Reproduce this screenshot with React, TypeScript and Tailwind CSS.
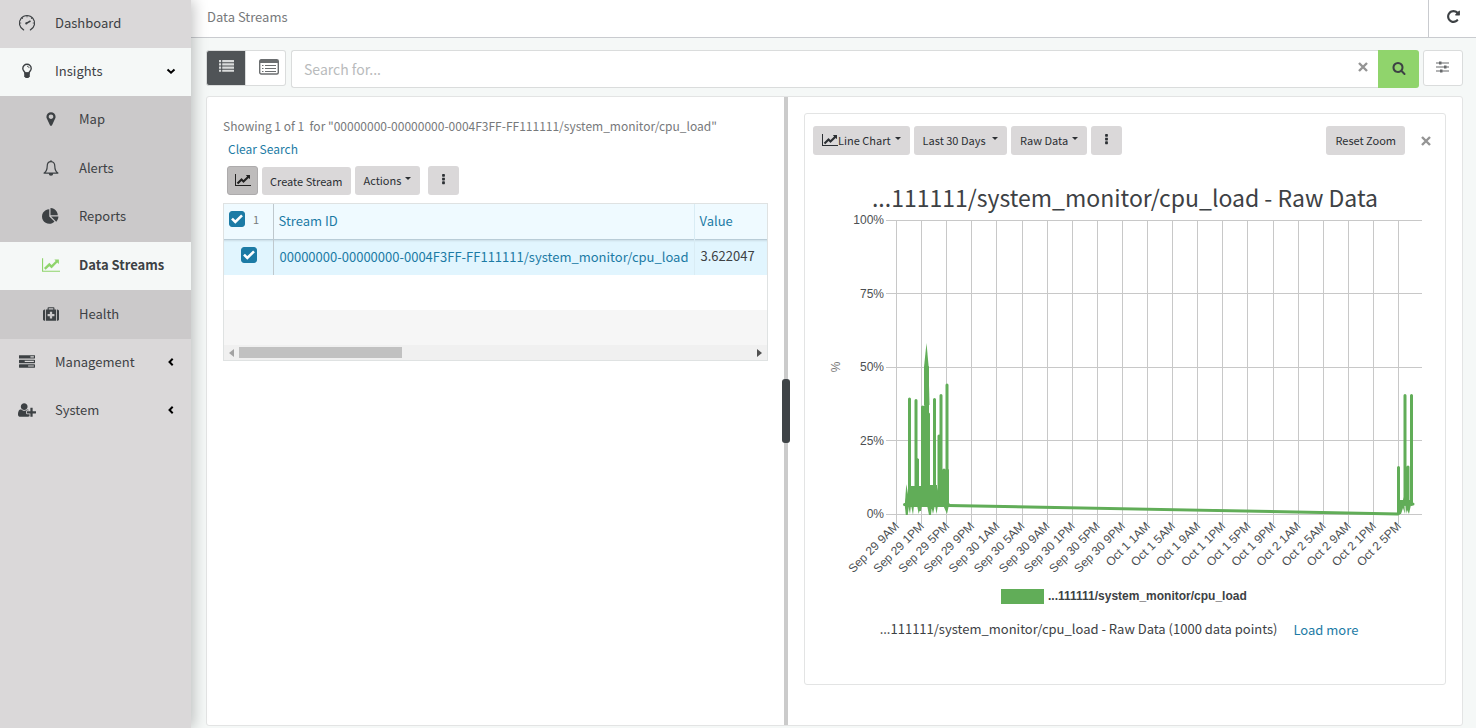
import React, { useState } from "react";

type P = { className?: string };

const paths = {
  search: "M1216 832q0-185-131.5-316.5t-316.5-131.5-316.5 131.5-131.5 316.5 131.5 316.5 316.5 131.5 316.5-131.5 131.5-316.5zm512 832q0 52-38 90t-90 38q-54 0-90-38l-343-342q-179 124-399 124-143 0-273.5-55.5t-225-150-150-225-55.5-273.5 55.5-273.5 150-225 225-150 273.5-55.5 273.5 55.5 225 150 150 225 55.5 273.5q0 220-124 399l343 343q37 37 37 90z",
  repeat: "M1664 256v448q0 26-19 45t-45 19h-448q-42 0-59-40-17-39 14-69l138-138q-148-137-349-137-104 0-198.5 40.5t-163.5 109.5-109.5 163.5-40.5 198.5 40.5 198.5 109.5 163.5 163.5 109.5 198.5 40.5q119 0 225-52t179-147q7-10 23-12 15 0 25 9l137 138q9 8 9.5 20.5t-7.5 22.5q-109 132-264 204.5t-327 72.5q-156 0-298-61t-245-164-164-245-61-298 61-298 164-245 245-164 298-61q147 0 284.5 55.5t244.5 156.5l130-129q29-31 70-14 39 17 39 59z",
  marker: "M1152 640q0-106-75-181t-181-75-181 75-75 181 75 181 181 75 181-75 75-181zm256 0q0 109-33 179l-364 774q-16 33-47.5 52t-67.5 19-67.5-19-46.5-52l-365-774q-33-70-33-179 0-212 150-362t362-150 362 150 150 362z",
  medkit: "M1280 1120v-192q0-14-9-23t-23-9h-224v-224q0-14-9-23t-23-9h-192q-14 0-23 9t-9 23v224h-224q-14 0-23 9t-9 23v192q0 14 9 23t23 9h224v224q0 14 9 23t23 9h192q14 0 23-9t9-23v-224h224q14 0 23-9t9-23zm-640-736h512v-128h-512v128zm-416 0v1280h-32q-80 0-136-56t-56-136v-896q0-80 56-136t136-56h32zm1248 0v1280h-1152v-1280h192v-160q0-40 28-68t68-28h576q40 0 68 28t28 68v160h192zm320 192v896q0 80-56 136t-136 56h-32v-1280h32q80 0 136 56t56 136z",
  pie: "M768 890l546 546q-106 108-247.5 168t-298.5 60q-209 0-385.5-103t-279.5-279.5-103-385.5 103-385.5 279.5-279.5 385.5-103v762zm187 6h773q0 157-60 298.5t-168 247.5zm709-128h-768v-768q209 0 385.5 103t279.5 279.5 103 385.5z",
  tasks: "M1024 1408h640v-128h-640v128zm-384-512h1024v-128h-1024v128zm640-512h384v-128h-384v128zm512 832v256q0 26-19 45t-45 19h-1664q-26 0-45-19t-19-45v-256q0-26 19-45t45-19h1664q26 0 45 19t19 45zm0-512v256q0 26-19 45t-45 19h-1664q-26 0-45-19t-19-45v-256q0-26 19-45t45-19h1664q26 0 45 19t19 45zm0-512v256q0 26-19 45t-45 19h-1664q-26 0-45-19t-19-45v-256q0-26 19-45t45-19h1664q26 0 45 19t19 45z",
  ellipsis: "M1088 1248v192q0 40-28 68t-68 28h-192q-40 0-68-28t-28-68v-192q0-40 28-68t68-28h192q40 0 68 28t28 68zm0-512v192q0 40-28 68t-68 28h-192q-40 0-68-28t-28-68v-192q0-40 28-68t68-28h192q40 0 68 28t28 68zm0-512v192q0 40-28 68t-68 28h-192q-40 0-68-28t-28-68v-192q0-40 28-68t68-28h192q40 0 68 28t28 68z",
  list: "M256 1312v192q0 32-32 32h-192q-32 0-32-32v-192q0-32 32-32h192q32 0 32 32zm0-384v192q0 32-32 32h-192q-32 0-32-32v-192q0-32 32-32h192q32 0 32 32zm0-384v192q0 32-32 32h-192q-32 0-32-32v-192q0-32 32-32h192q32 0 32 32zm1536 768v192q0 32-32 32h-1344q-32 0-32-32v-192q0-32 32-32h1344q32 0 32 32zm-1536-1152v192q0 32-32 32h-192q-32 0-32-32v-192q0-32 32-32h192q32 0 32 32zm1536 768v192q0 32-32 32h-1344q-32 0-32-32v-192q0-32 32-32h1344q32 0 32 32zm0-384v192q0 32-32 32h-1344q-32 0-32-32v-192q0-32 32-32h1344q32 0 32 32zm0-384v192q0 32-32 32h-1344q-32 0-32-32v-192q0-32 32-32h1344q32 0 32 32z",
};

const Fa = ({ name, className }: { name: keyof typeof paths; className?: string }) => (
  <svg viewBox="0 0 1792 1792" fill="currentColor" aria-hidden="true" className={className}>
    <path d={paths[name]} />
  </svg>
);

const CrossIcon = ({ className }: P) => (
  <svg viewBox="0 0 14 14" fill="none" stroke="currentColor" strokeWidth="2.4" aria-hidden="true" className={className}>
    <path d="M3 3l8 8M11 3l-8 8" />
  </svg>
);

const LineChartIcon = ({ className }: P) => (
  <svg viewBox="0 0 2048 1792" fill="currentColor" aria-hidden="true" className={className}>
    <path d="M2048 1536v128h-2048v-1536h128v1408h1920zm-128-1248v435q0 21-19.5 29.5t-35.5-7.5l-121-121-633 633q-10 10-23 10t-23-10l-233-233-416 416-192-192 585-585q10-10 23-10t23 10l233 233 464-464-121-121q-16-16-7.5-35.5t29.5-19.5h435q14 0 23 9t9 23z" />
  </svg>
);

const UserPlusIcon = ({ className }: P) => (
  <svg viewBox="0 0 2048 1792" fill="currentColor" aria-hidden="true" className={className}>
    <path d="M704 896q-159 0-271.5-112.5t-112.5-271.5 112.5-271.5 271.5-112.5 271.5 112.5 112.5 271.5-112.5 271.5-271.5 112.5zm960 128h352q13 0 22.5 9.5t9.5 22.5v192q0 13-9.5 22.5t-22.5 9.5h-352v352q0 13-9.5 22.5t-22.5 9.5h-192q-13 0-22.5-9.5t-9.5-22.5v-352h-352q-13 0-22.5-9.5t-9.5-22.5v-192q0-13 9.5-22.5t22.5-9.5h352v-352q0-13 9.5-22.5t22.5-9.5h192q13 0 22.5 9.5t9.5 22.5v352zm-736 224q0 52 38 90t90 38h256v238q-68 50-171 50h-874q-121 0-194-69t-73-190q0-53 3.5-103.5t14-109 26.5-108.5 43-97.5 62-81 85.5-53.5 111.5-20q19 0 39 17 79 61 154.5 91.5t164.5 30.5 164.5-30.5 154.5-91.5q20-17 39-17 132 0 217 96h-223q-52 0-90 38t-38 90v192z" />
  </svg>
);

const GaugeIcon = ({ className }: P) => (
  <svg viewBox="0 0 18 18" fill="none" stroke="currentColor" strokeWidth="1.2" aria-hidden="true" className={className}>
    <path d="M5.6 15.9A7.6 7.6 0 1 1 12.4 15.9" strokeLinecap="round" />
    <path d="M9 1.500v1.800M1.500 9h1.700M14.800 9h1.700M3.700 3.700l1.200 1.200M14.300 3.700l-1.200 1.200" strokeWidth="0.900" />
    <path d="M8.300 9.400l4.200-2.400" strokeWidth="1.500" />
    <circle cx="8.300" cy="9.400" r="1.100" fill="currentColor" stroke="none" />
  </svg>
);

const BulbIcon = ({ className }: P) => (
  <svg viewBox="0 0 12 16" fill="none" stroke="currentColor" aria-hidden="true" className={className}>
    <path d="M4 10C3.700 8.400 1.800 7.700 1.800 5.400a4.200 4.200 0 0 1 8.400 0C10.200 7.700 8.300 8.400 8 10z" strokeWidth="1.400" />
    <path d="M6 3.300c1.300 0 2 .7 2 1.800" strokeWidth="0.900" />
    <path d="M3.200 9.500h5.600v4L7.300 15H4.700L3.200 13.500z" fill="currentColor" stroke="none" />
  </svg>
);

const BellIcon = ({ className }: P) => (
  <svg viewBox="0 0 16 16" fill="none" stroke="currentColor" strokeWidth="1.200" strokeLinejoin="round" aria-hidden="true" className={className}>
    <path d="M8 1.700C5.200 1.700 4.200 4 4.200 6.300c0 3.500-1 5.400-3.100 6.800h13.800c-2.100-1.400-3.100-3.300-3.100-6.800 0-2.300-1-4.600-3.800-4.600z" />
    <path d="M6.400 13.500a1.600 1.600 0 0 0 3.200 0z" fill="currentColor" />
    <path d="M8 .3v1.400" />
  </svg>
);

const CardListIcon = ({ className }: P) => (
  <svg viewBox="0 0 20 16" fill="none" stroke="currentColor" aria-hidden="true" className={className}>
    <rect x="0.700" y="0.700" width="18.600" height="14.300" rx="1.500" strokeWidth="1.400" />
    <path d="M1 1h18v3H1z" fill="currentColor" stroke="none" />
    <path d="M3 6.500h1.500M6 6.500h11M3 9.500h1.500M6 9.500h11M3 12.500h1.500M6 12.500h11" strokeWidth="1.200" />
  </svg>
);

const SlidersIcon = ({ className }: P) => (
  <svg viewBox="0 0 14 12" fill="currentColor" aria-hidden="true" className={className}>
    <path d="M0 1.500h13v1H0zM0 5.500h13v1H0zM0 9.500h13v1H0z" />
    <path d="M3 .5h2.500v3H3zM8 4.500h2.500v3H8zM4 8.500h2.500v3H4z" />
  </svg>
);

const Chevron = ({ open }: { open?: boolean }) => (
  <svg viewBox="0 0 10 10" fill="none" stroke="#000" strokeWidth="2" aria-hidden="true" className="mr-[15px] size-[10px]">
    {open ? <path d="M1.500 3.500L5 6.700l3.500-3.200" /> : <path d="M6.700 1.700L3.500 5l3.200 3.300" />}
  </svg>
);

const Caret = () => <span className="mb-[2px] ml-1 inline-block border-x-[3px] border-t-[3px] border-x-transparent border-t-current" />;

const btn = "flex h-[29px] items-center rounded-[3px] bg-[#dad8d9] px-[9px] pb-[2px] text-[11px] text-[#2b2f33]";

function NavItem({ icon, label, arrow, active }: { icon: React.ReactNode; label: string; arrow?: "open" | "closed"; active?: boolean }) {
  return (
    <a href="#" className={active ? "flex h-12 items-center bg-[#f5f8f7] pb-[2px]" : "flex h-12 items-center pb-[2px]"}>
      <span className="flex w-[55px] justify-center pr-[2px]">{icon}</span>
      <span className="flex-1">{label}</span>
      {arrow && <Chevron open={arrow === "open"} />}
    </a>
  );
}

function SubItem({ icon, label, active }: { icon: React.ReactNode; label: string; active?: boolean }) {
  return (
    <a href="#" className={active ? "flex flex-1 items-center bg-[#f5f8f7] pb-[2px] font-bold" : "flex flex-1 items-center pb-[2px]"}>
      <span className="ml-6 flex w-[55px] justify-center pr-[2px]">{icon}</span>
      <span>{label}</span>
    </a>
  );
}

function Check({ label }: { label: string }) {
  return (
    <span className="relative inline-flex size-4">
      <input type="checkbox" defaultChecked aria-label={label} className="peer size-4 appearance-none rounded-[3px] border border-[#1c7ba5] checked:bg-[#1c7ba5]" />
      <svg viewBox="0 0 16 16" fill="none" stroke="#fff" strokeWidth="2.600" aria-hidden="true" className="pointer-events-none absolute inset-0 hidden peer-checked:block">
        <path d="M3 7.700l3.300 3.300L13 4.300" />
      </svg>
    </span>
  );
}

const days = ["Sep 29", "Sep 30", "Oct 1", "Oct 2"];
const ticks = days.flatMap((d) => ["1AM", "5AM", "9AM", "1PM", "5PM", "9PM"].map((h) => `${d} ${h}`)).slice(2, 23);

function Chart() {
  return (
    <svg viewBox="0 0 640 400" className="block w-full" role="img" aria-label="CPU load over time">
      <g stroke="#c8c8c8" strokeWidth="1">
        {[10.5, 83.5, 157.5, 230.5, 304.5].map((y) => (
          <line key={y} x1="81" x2="617" y1={y} y2={y} />
        ))}
        {ticks.map((t, i) => {
          const x = Math.round(91 + i * 25.1) + 0.5;
          return <line key={t} x1={x} x2={x} y1="10" y2="314" />;
        })}
      </g>
      <g fill="#4c4f52" fontSize="12" fontFamily="'Liberation Sans', sans-serif">
        {["100%", "75%", "50%", "25%", "0%"].map((t, i) => (
          <text key={t} x="79" y={14 + i * 73.5} textAnchor="end">{t}</text>
        ))}
        {ticks.map((t, i) => (
          <text key={t} textAnchor="end" transform={`translate(${92 + i * 25.1} 314) rotate(-45)`} y="4">{t}</text>
        ))}
        <text transform="translate(35 157) rotate(-90)" textAnchor="middle" fill="#777">%</text>
      </g>
      <g stroke="#61ad58" strokeWidth="3" strokeLinejoin="round" strokeLinecap="round" fill="none">
        <path d="M99.500 294.500h44M104.500 189v106M111 190.500v104M117.500 197v98M119.500 197v98M121 157v138M122.500 157v138M123.500 204v91M129.500 189.500v105M134 226v69M136 185.500v110M139 260v35M142 175v120M142.500 260v35" />
        <path d="M143 295.500L593 304" />
        <path d="M593.500 257.500v46M600 185.500v109M603 257v38M606.500 185.500v109M594 294h14" />
        <g fill="#61ad58" stroke="none">
          <path d="M103 276h22v-1h7v2l4 15h8v5h-41zM112 248l2 1v46h-2z" />
          <path d="M119 157l2.500-24 2 22 1 40h-5.500z" />
          <path d="M100 292l1.300-18 2.500 15v7l-1 9h-2l-1-9z" />
          <path d="M103 295h3l-1 9zM106 295h3l-1 10zM112 295h5l-1 6-1.500 0-.8 3zM122 295h5l-1 10h-2zM126 295h4l-2 9zM130 295h3l-1.500 9zM138 295h6l-2 9zM594 290h4l1-3 1 17-2-6-2 6h-2zM600 290h7l-3 14-2-4-1 4z" />
        </g>
      </g>
      <rect x="196" y="379" width="43" height="15" fill="#61ad58" />
      <text x="243" y="390" fill="#3d4144" fontSize="12" fontWeight="bold" fontFamily="'Liberation Sans', sans-serif">...111111/system_monitor/cpu_load</text>
    </svg>
  );
}

export default function App() {
  const [query, setQuery] = useState("");
  return (
    <div className="flex min-h-screen bg-[#f5f8f7] font-['Noto_Sans_CJK_SC',sans-serif] text-[13px] leading-[20px] text-[#3d4144]">
      <nav className="z-10 w-[191px] shrink-0 bg-[#dad8d9] shadow-[2px_0_14px_rgba(0,0,0,0.25)]">
        <NavItem icon={<GaugeIcon className="size-[18px]" />} label="Dashboard" />
        <NavItem active icon={<BulbIcon className="h-4 w-3" />} label="Insights" arrow="open" />
        <div className="flex h-[243px] flex-col bg-[#cbc9ca]">
          <SubItem icon={<Fa name="marker" className="size-4" />} label="Map" />
          <SubItem icon={<BellIcon className="size-4" />} label="Alerts" />
          <SubItem icon={<Fa name="pie" className="size-[17px]" />} label="Reports" />
          <SubItem active icon={<LineChartIcon className="h-4 w-[18px] text-[#8fd46b]" />} label="Data Streams" />
          <SubItem icon={<Fa name="medkit" className="size-4" />} label="Health" />
        </div>
        <NavItem icon={<Fa name="tasks" className="size-4" />} label="Management" arrow="closed" />
        <NavItem icon={<UserPlusIcon className="h-4 w-[18px]" />} label="System" arrow="closed" />
      </nav>

      <div className="flex min-w-0 flex-1 flex-col">
        <header className="flex h-[38px] items-stretch border-b border-[#c9cbcf] bg-white">
          <h1 className="flex flex-1 items-center pb-1 pl-4 text-[#77797b]">Data Streams</h1>
          <button aria-label="Refresh" className="flex w-12 items-center justify-center border-l border-[#c9cbcf] pb-1 pl-[2px]">
            <Fa name="repeat" className="size-[15px]" />
          </button>
        </header>

        <div className="flex items-start pt-3 pr-[13px] pl-[15px]">
          <button aria-label="List view" className="flex h-9 w-10 items-center justify-center rounded-l-[3px] border border-[#dadcdc] bg-[#505457] pb-[3px] text-[#dadcdc]">
            <Fa name="list" className="size-[15px]" />
          </button>
          <button aria-label="Card view" className="flex h-9 w-10 items-center justify-center rounded-r-[3px] border border-l-0 border-[#dadcdc] bg-white pb-[2px] pl-[6px] text-[#6b6e70]">
            <CardListIcon className="h-4 w-5" />
          </button>
          <div className="ml-[5px] flex h-[38px] flex-1 items-center rounded-l-[3px] border border-r-0 border-[#dadcdc] bg-white">
            <input aria-label="Search" placeholder="Search for..." value={query} onChange={(e) => setQuery(e.target.value)} className="min-w-0 flex-1 bg-transparent px-3 text-[14px] outline-none placeholder:text-[#b9bbbc]" />
            <button aria-label="Clear" onClick={() => setQuery("")} className="mr-2 pb-1 text-[#949494]">
              <CrossIcon className="size-[14px]" />
            </button>
          </div>
          <button aria-label="Run search" className="flex h-[38px] w-[41px] items-center justify-center rounded-r-[3px] bg-[#90d46c] pb-[2px]">
            <Fa name="search" className="size-[14px]" />
          </button>
          <button aria-label="Filters" className="ml-1 flex h-9 w-10 items-center justify-center rounded-[3px] border border-[#dadcdc] bg-white pb-[2px] text-[#66696b]">
            <SlidersIcon className="h-3 w-[14px]" />
          </button>
        </div>

        <main className="mt-2 mr-[13px] mb-[2px] ml-[15px] flex flex-1 rounded-[3px] border border-[#e3e4e4] bg-white">
          <section className="w-[577px] shrink-0 px-4 pt-[19px]">
            <p className="text-[12px] text-[#77797b]">Showing 1 of 1&nbsp; for "00000000-00000000-0004F3FF-FF111111/system_monitor/cpu_load"</p>
            <a href="#" className="mt-[3px] ml-[5px] block text-[12px] text-[#1c7ba5]">Clear Search</a>
            <div className="mt-[7px] ml-1 flex items-end gap-1">
              <button aria-label="Chart" className="flex h-[29px] w-[31px] items-center justify-center rounded-[3px] border border-[#adabac] bg-[#bebcbc] pb-[2px] text-[#222]">
                <LineChartIcon className="h-[14px] w-4" />
              </button>
              <button className="flex h-7 items-center rounded-[3px] bg-[#dad8d9] px-2 text-[11px] text-[#2b2f33]">Create Stream</button>
              <button className={btn}>Actions<Caret /></button>
              <button aria-label="More" className={`${btn} ml-1`}><Fa name="ellipsis" className="size-[13px]" /></button>
            </div>

            <div className="mt-2 border border-[#dfe2e2]">
              <table className="w-full table-fixed border-collapse">
                <thead>
                  <tr className="h-[35px] border-b border-[#b9ccd7] bg-[#effaff] text-left text-[#1c7ba5]">
                    <th className="w-[49px] border-r border-[#bfc8cd] pb-1 pl-[5px] font-normal">
                      <span className="flex items-center gap-2 text-[11px] text-[#77797b]"><Check label="Select all" />1</span>
                    </th>
                    <th className="border-r border-[#d9ecf4] pl-[5px] font-normal">Stream ID</th>
                    <th className="w-[73px] pl-[5px] font-normal">Value</th>
                  </tr>
                </thead>
                <tbody>
                  <tr className="h-9 bg-[#e1f5fe] shadow-[inset_0_3px_3px_-2px_rgba(0,0,0,0.2)]">
                    <td className="border-r border-[#bfc8cd] pb-[5px] pl-[17px]"><span className="flex"><Check label="Select stream" /></span></td>
                    <td className="border-r border-[#d9ecf4] pl-[6px] whitespace-nowrap text-[#1c7ba5]">00000000-00000000-0004F3FF-FF111111/system_monitor/cpu_load</td>
                    <td className="pb-[2px] pl-[6px]">3.622047</td>
                  </tr>
                </tbody>
              </table>
              <div className="h-[35px] bg-white" />
              <div className="h-[35px] bg-[#f6f6f6]" />
              <div className="flex h-[15px] items-center bg-[#f0f0f0]">
                <span className="mx-[5px] border-y-4 border-r-[5px] border-y-transparent border-r-[#a3a3a3]" />
                <span className="h-[11px] w-[163px] bg-[#c1c1c1]" />
                <span className="mr-[5px] ml-auto border-y-4 border-l-[5px] border-y-transparent border-l-[#505050]" />
              </div>
            </div>
          </section>

          <div className="relative w-1 shrink-0 bg-[#cbcbcb]">
            <span className="absolute top-[282px] -left-[2px] h-16 w-2 rounded-[3px] bg-[#3f4447]" />
          </div>

          <section className="min-w-0 flex-1 p-4">
            <div className="rounded-[3px] border border-[#e3e4e4] pb-11">
              <div className="flex gap-1 px-2 pt-3">
                <button className={btn}><LineChartIcon className="h-[14px] w-4" />Line Chart<Caret /></button>
                <button className={btn}>Last 30 Days&nbsp;<Caret /></button>
                <button className={btn}>Raw Data<Caret /></button>
                <button aria-label="More chart options" className={btn}><Fa name="ellipsis" className="size-[13px]" /></button>
                <button className={`${btn} ml-auto`}>Reset Zoom</button>
                <button aria-label="Close chart" className="mr-1 ml-[10px] flex items-center text-[#949494]">
                  <CrossIcon className="size-[14px]" />
                </button>
              </div>
              <h2 className="mt-[26px] text-center text-[23px] leading-[32px]">...111111/system_monitor/cpu_load - Raw Data</h2>
              <div className="-mt-[3px]"><Chart /></div>
              <p className="mt-[9px] flex justify-center gap-4 pr-3">
                <span>...111111/system_monitor/cpu_load - Raw Data (1000 data points)</span>
                <a href="#" className="pt-px text-[#1c7ba5]">Load more</a>
              </p>
            </div>
          </section>
        </main>
      </div>
    </div>
  );
}
